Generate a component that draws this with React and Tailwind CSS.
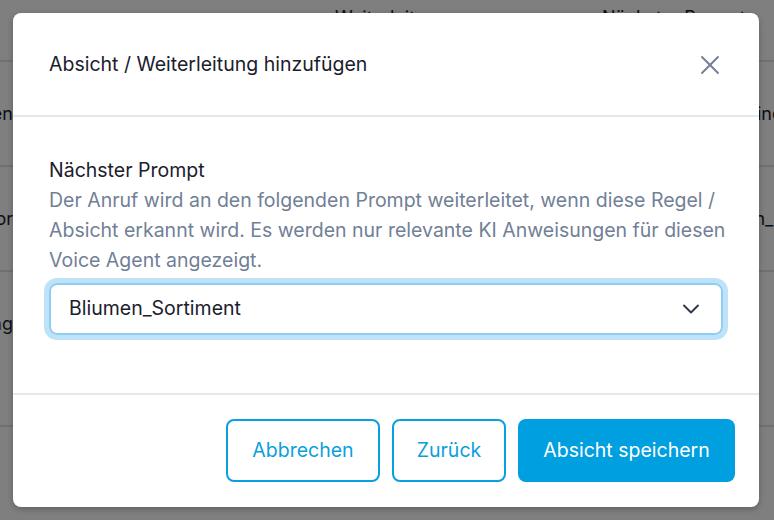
import { ChevronDown, X } from 'lucide-react'

const rows = [
  { h: 'h-[105px]', left: 'Bestellung abbrechen', right: 'Allgemeine_Infos', shift: 'ml-[-71px]' },
  { h: 'h-[105px]', left: 'Blumen Dekor', right: 'Bliumen_Sortiment', shift: 'ml-[-62px]' },
  { h: 'h-[155px]', left: 'Öffnungszeiten Anfrage Weiterleitung', right: '', shift: '' },
]

function PageBehind() {
  return (
    <div className="w-[774px] text-[18px] text-[#1a202c]">
      {/* table header */}
      <div className="flex h-[62px] border-b-2 border-[#e2e2e2]">
        <div className="w-[335px]" />
        <div className="w-[267px] pt-[4px]">Weiterleitung</div>
        <div className="pt-[4px] whitespace-nowrap">Nächster Prompt</div>
      </div>
      {rows.map((r, i) => (
        <div key={i} className={`flex ${r.h} border-b-2 border-[#e2e2e2]`}>
          <div className="flex w-[13px] shrink-0 justify-end overflow-hidden">
            <span className="whitespace-nowrap pt-[38px]">{r.left}</span>
          </div>
          <div className="w-[746px] shrink-0" />
          <div className="flex-1 overflow-hidden whitespace-nowrap pt-[38px]">
            <span className={`inline-block ${r.shift}`}>{r.right}</span>
          </div>
        </div>
      ))}
    </div>
  )
}

export default function App() {
  return (
    <div className="relative h-[520px] w-[774px] overflow-hidden bg-white font-['Inter','Lato',sans-serif]">
      <PageBehind />

      {/* overlay */}
      <div className="absolute inset-0 bg-black/50" />

      {/* modal */}
      <div className="absolute inset-0 flex p-[13px] pr-[15px]">
        <div className="flex h-[494px] w-[746px] flex-col rounded-[8px] bg-white shadow-[0_2px_6px_rgba(0,0,0,0.25)]">
          <div className="flex h-[104px] items-center justify-between border-b-2 border-[#e6e8ee] pl-9 pr-[33px] pt-[2px]">
            <h2 className="text-[19.5px] text-[#1a202c]">Absicht / Weiterleitung hinzufügen</h2>
            <X size={32} strokeWidth={1.4} className="text-[#718096]" />
          </div>

          <div className="flex-1 px-9 pt-[38px]">
            <p className="text-[19.5px] leading-[30px] text-[#1a202c]">Nächster Prompt</p>
            <p className="mr-[-18px] text-[19.5px] leading-[30px] text-[#718096]">
              Der Anruf wird an den folgenden Prompt weiterleitet, wenn diese Regel / Absicht erkannt wird. Es werden
              nur relevante KI Anweisungen für diesen Voice Agent angezeigt.
            </p>
            <div className="mt-[8px] flex h-[52px] items-center justify-between rounded-[8px] border-2 border-[#90cdf4] pl-[18px] pr-[16px] ring-[5px] ring-[#bee3f8]">
              <span className="text-[19.5px] text-[#1a202c]">Bliumen_Sortiment</span>
              <ChevronDown size={28} strokeWidth={1.6} className="text-[#2d3748]" />
            </div>
          </div>

          <div className="flex justify-end gap-3 border-t-2 border-[#e6e8ee] px-6 pt-6 pb-[25px]">
            <button className="h-[63px] w-[154px] rounded-[8px] border-2 border-[#0ba0dd] text-[19.5px] text-[#0a9fdc]">
              Abbrechen
            </button>
            <button className="h-[63px] w-[114px] rounded-[8px] border-2 border-[#0ba0dd] text-[19.5px] text-[#0a9fdc]">
              Zurück
            </button>
            <button className="h-[63px] w-[217px] rounded-[8px] bg-[#009fe0] text-[19.5px] text-white">
              Absicht speichern
            </button>
          </div>
        </div>
      </div>
    </div>
  )
}
